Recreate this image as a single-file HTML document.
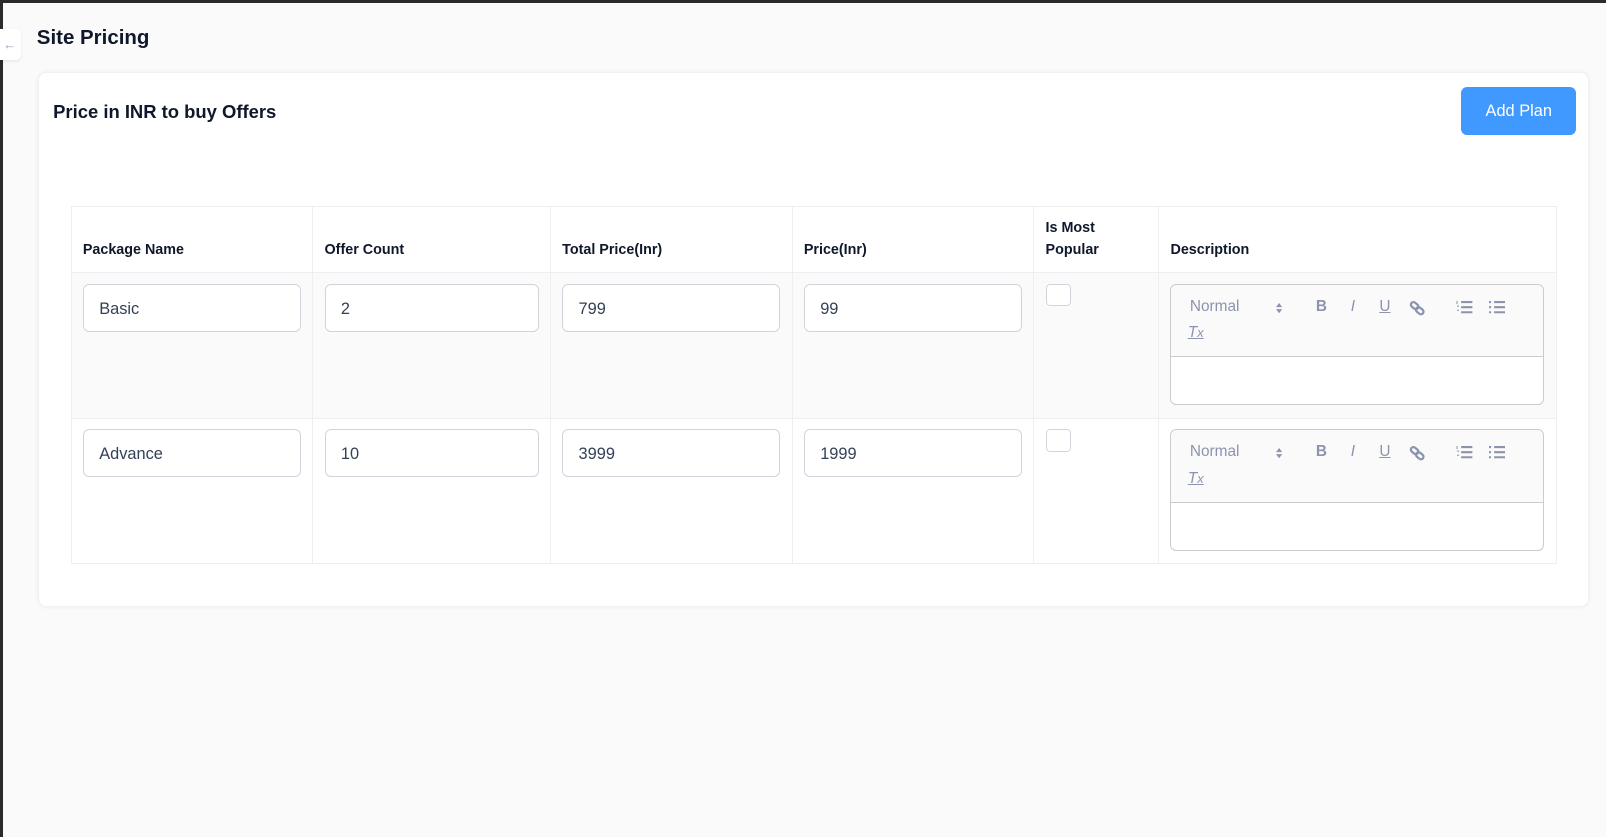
<!DOCTYPE html>
<html><head><meta charset="utf-8"><style>
html{zoom:1.0242}
*{box-sizing:border-box;margin:0;padding:0}
body{width:1568px;height:817px;background:#fafafa;font-family:"Liberation Sans",sans-serif;color:#0f172a;position:relative;overflow:hidden;border-top:3px solid #2a2a2a;border-left:3px solid #2a2a2a}
.tab{position:absolute;left:-3px;top:25px;width:21px;height:31px;background:#fff;border-radius:0 5px 5px 0;box-shadow:0 1px 3px rgba(0,0,0,.08);color:#94a3b8;font-size:13px;line-height:31px;padding-left:3px}
h1{position:absolute;left:33px;top:22px;font-size:20px;font-weight:600}
.card{position:absolute;left:34px;top:67px;width:1515px;height:523px;background:#fff;border-radius:8px;box-shadow:0 0 4px rgba(0,0,0,.06);border:1px solid #f1f1f1}
h2{position:absolute;left:14px;top:28px;font-size:18px;font-weight:600}
.btn{position:absolute;left:1389px;top:14px;width:112px;height:47px;background:#4099ff;border-radius:6px;color:#fff;font-size:16px;text-align:center;line-height:47px}
table{position:absolute;left:31px;top:130px;width:1451px;border-collapse:collapse}
td,th{border:1px solid #eceef0;vertical-align:top;text-align:left}
th{height:65px;font-size:14px;font-weight:700;padding:0 11px 11px;vertical-align:bottom;line-height:21px}
tr.r1 td{background:#fafafa}
td{height:142px;padding:10px 11px}
.in{height:47px;border:1px solid #d1d5db;border-radius:6px;background:#fff;font-size:16px;color:#334155;padding-left:15px;line-height:47px}
.cb{width:25px;height:22px;border:1px solid #d1d5db;border-radius:4px;background:#fff}
.ed{border:1px solid #ccc;border-radius:6px;background:#fff;height:119px}
.tb{height:71px;border-bottom:1px solid #ccc;background:#fafafa;border-radius:6px 6px 0 0;position:relative;color:#8c93ad;font-size:15px}
.tb span,.tb svg{position:absolute}
</style></head><body>
<div class="tab">←</div>
<h1>Site Pricing</h1>
<div class="card">
<h2>Price in INR to buy Offers</h2>
<div class="btn">Add Plan</div>
<table>
<tr><th style="width:236px">Package Name</th><th style="width:232px">Offer Count</th><th style="width:236px">Total Price(Inr)</th><th style="width:236px">Price(Inr)</th><th style="width:122px">Is Most<br>Popular</th><th>Description</th></tr>
<tr class="r1"><td><div class="in">Basic</div></td><td><div class="in">2</div></td><td><div class="in">799</div></td><td><div class="in">99</div></td><td><div class="cb"></div></td><td>
<div class="ed"><div class="tb"><span style="left:18px;top:13px">Normal</span><svg style="left:101px;top:17px" width="8" height="12" viewBox="0 0 8 12"><path d="M1 5L4 1L7 5ZM1 7L4 11L7 7Z" fill="#8c93ad"/></svg><span style="left:141px;top:13px;font-weight:700">B</span><span style="left:175px;top:13px;font-style:italic">I</span><span style="left:203px;top:13px;text-decoration:underline">U</span><svg style="left:232px;top:15px" width="16" height="16" viewBox="0 0 16 16" fill="none" stroke="#8c93ad" stroke-width="2.2"><rect x="1.5" y="3" width="8" height="5" rx="2.5" transform="rotate(40 5.5 5.5)"/><rect x="6.5" y="8" width="8" height="5" rx="2.5" transform="rotate(40 10.5 10.5)"/></svg><svg style="left:278px;top:15px" width="16" height="14" viewBox="0 0 16 14" stroke="#8c93ad" stroke-width="2"><path d="M5 2H16M5 7H16M5 12H16"/><path d="M1 1V4M1 6H3M1 10H3" stroke-width="1"/></svg><svg style="left:310px;top:15px" width="16" height="14" viewBox="0 0 16 14" stroke="#8c93ad" stroke-width="2"><path d="M5 2H16M5 7H16M5 12H16M0 2H2M0 7H2M0 12H2"/></svg><span style="left:16px;top:39px;font-style:italic;text-decoration:underline">T<small>x</small></span></div></div></td></tr>
<tr><td><div class="in">Advance</div></td><td><div class="in">10</div></td><td><div class="in">3999</div></td><td><div class="in">1999</div></td><td><div class="cb"></div></td><td>
<div class="ed"><div class="tb"><span style="left:18px;top:13px">Normal</span><svg style="left:101px;top:17px" width="8" height="12" viewBox="0 0 8 12"><path d="M1 5L4 1L7 5ZM1 7L4 11L7 7Z" fill="#8c93ad"/></svg><span style="left:141px;top:13px;font-weight:700">B</span><span style="left:175px;top:13px;font-style:italic">I</span><span style="left:203px;top:13px;text-decoration:underline">U</span><svg style="left:232px;top:15px" width="16" height="16" viewBox="0 0 16 16" fill="none" stroke="#8c93ad" stroke-width="2.2"><rect x="1.5" y="3" width="8" height="5" rx="2.5" transform="rotate(40 5.5 5.5)"/><rect x="6.5" y="8" width="8" height="5" rx="2.5" transform="rotate(40 10.5 10.5)"/></svg><svg style="left:278px;top:15px" width="16" height="14" viewBox="0 0 16 14" stroke="#8c93ad" stroke-width="2"><path d="M5 2H16M5 7H16M5 12H16"/><path d="M1 1V4M1 6H3M1 10H3" stroke-width="1"/></svg><svg style="left:310px;top:15px" width="16" height="14" viewBox="0 0 16 14" stroke="#8c93ad" stroke-width="2"><path d="M5 2H16M5 7H16M5 12H16M0 2H2M0 7H2M0 12H2"/></svg><span style="left:16px;top:39px;font-style:italic;text-decoration:underline">T<small>x</small></span></div></div></td></tr>
</table>
</div>
</body></html>
